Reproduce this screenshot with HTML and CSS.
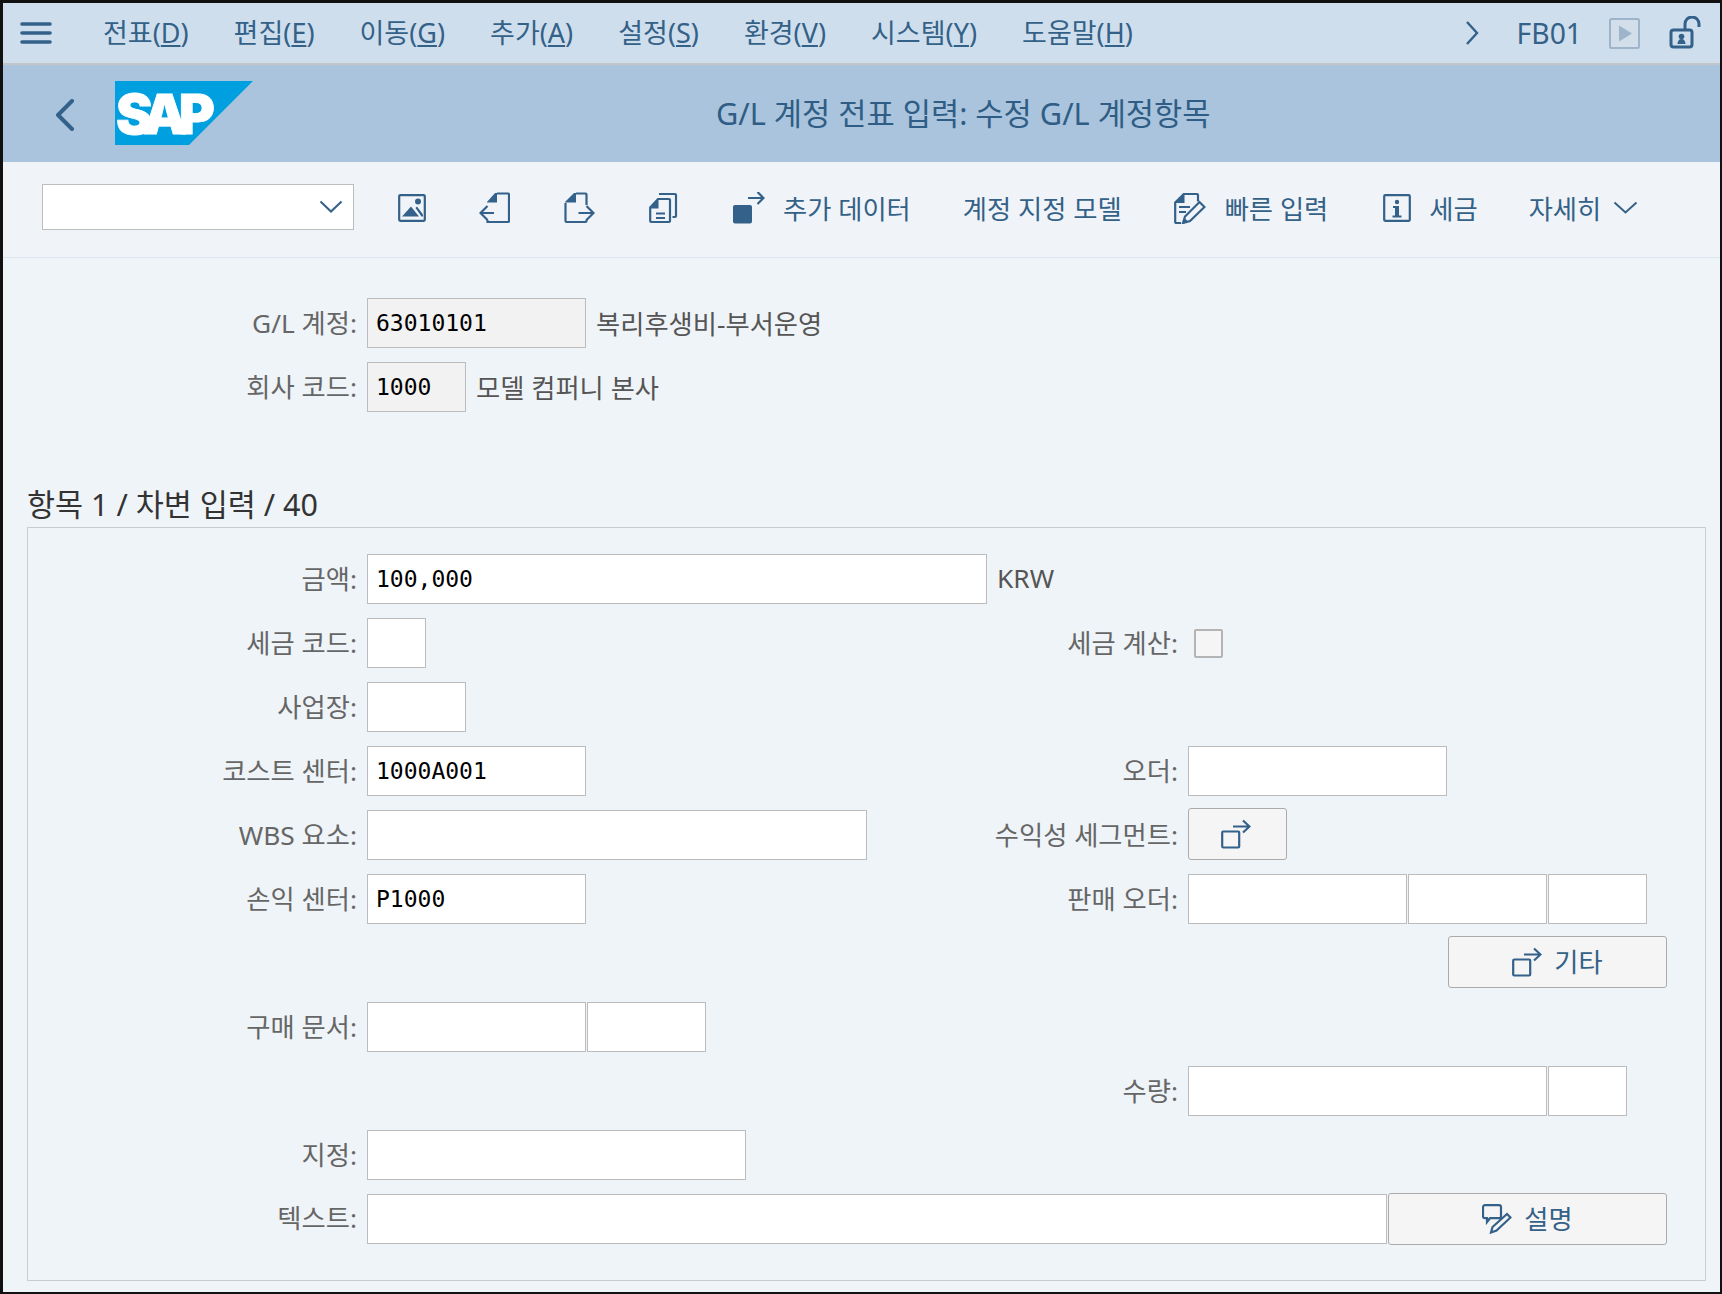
FILE: index.html
```html
<!DOCTYPE html>
<html lang="ko">
<head>
<meta charset="utf-8">
<title>G/L 계정 전표 입력</title>
<link rel="stylesheet" href="styles.css">
</head>
<body>
<div class="frame">
  <header class="menubar">
    <svg class="ic-burger" width="32" height="24" viewBox="0 0 32 24"><path d="M2 3h28M2 12h28M2 21h28"/></svg>
    <nav class="menu">
      <span>전표(<u>D</u>)</span>
      <span>편집(<u>E</u>)</span>
      <span>이동(<u>G</u>)</span>
      <span>추가(<u>A</u>)</span>
      <span>설정(<u>S</u>)</span>
      <span>환경(<u>V</u>)</span>
      <span>시스템(<u>Y</u>)</span>
      <span>도움말(<u>H</u>)</span>
    </nav>
    <svg class="ic-more" width="14" height="26" viewBox="0 0 14 26"><path d="M2 2l10 11L2 24"/></svg>
    <span class="tcode">FB01</span>
    <svg class="ic-play" width="31" height="31" viewBox="0 0 31 31"><rect x="1" y="1" width="29" height="29" rx="1.5"/><path d="M10 7.500l13 8-13 8z"/></svg>
    <svg class="ic-lock" width="33" height="33" viewBox="0 0 33 33"><rect class="s" x="2" y="14" width="21" height="17" rx="2.500"/><path class="s" d="M16 14V8a7 7 0 0 1 14 0v3"/><circle class="d" cx="12.500" cy="20.500" r="2.800"/><path class="d" d="M8.500 28c0-3 1.500-5 4-5s4 2 4 5z"/></svg>
  </header>

  <div class="titlebar">
    <svg class="ic-back" width="20" height="32" viewBox="0 0 20 32"><path d="M17 2L3 16l14 14"/></svg>
    <div class="logo"><span class="logo-text">SAP</span></div>
    <h1 class="title">G/L 계정 전표 입력: 수정 G/L 계정항목</h1>
  </div>

  <div class="toolbar">
    <div class="combo">
      <svg width="24" height="13" viewBox="0 0 24 13"><path d="M1.500 1.500L12 11.500 22.500 1.500"/></svg>
    </div>
    <svg class="tb i-img" width="28" height="28" viewBox="0 0 28 28"><rect class="s" x="1.200" y="1.200" width="25.600" height="25.600" rx="1"/><path class="d" d="M4 22.500l9-10 8 10z"/><circle class="d" cx="20" cy="7.500" r="3"/><path class="d" d="M17.500 14l1.500-1.500 6 8v2h-1.500z"/></svg>
    <svg class="tb i-prev" width="31" height="32" viewBox="0 0 31 32"><path class="s" d="M18 1.500h11a1 1 0 0 1 1 1V29a1 1 0 0 1-1 1H8.500v-2"/><path class="d" d="M8 10.500V10l8-9h2v9.500z"/><path class="s" d="M15 21H2M8.500 14L1.500 21l7 7"/></svg>
    <svg class="tb i-next" width="31" height="32" viewBox="0 0 31 32"><path class="s" d="M12 1.500h9.500a1 1 0 0 1 1 1V13M1.500 11v18a1 1 0 0 0 1 1H21.500a1 1 0 0 0 1-1v-1.500"/><path class="d" d="M1 10.500V10l9-9h2v9.500z"/><path class="s" d="M14.500 21H29M22.500 14l7 7-7 7"/></svg>
    <svg class="tb i-copy" width="29" height="32" viewBox="0 0 29 32"><path class="s" d="M1.200 15.500L9 7h11a1 1 0 0 1 1 1v21a1 1 0 0 1-1 1H2.200a1 1 0 0 1-1-1z"/><path class="d" d="M1 16.500L9.500 7v9.500z"/><path class="s" d="M10 2h16a1 1 0 0 1 1 1v21a1 1 0 0 1-1 1h-2.500"/><path class="s" d="M7 21.500h9M7 26h9"/></svg>
    <span class="tb-btn first">
      <svg width="32" height="32" viewBox="0 0 32 32"><rect class="d" x="0" y="13" width="19" height="18.500" rx="2"/><path class="s" d="M15 6h15.500M24.500 0l6 6-6 6"/></svg>
      <span class="lb">추가 데이터</span>
    </span>
    <span class="tb-txt">계정 지정 모델</span>
    <span class="tb-btn quick">
      <svg width="33" height="32" viewBox="0 0 33 32"><path class="s" d="M10 2h14a1 1 0 0 1 1 1v6.500M2.200 10v20a1 1 0 0 0 1 1H8"/><path class="d" d="M1.200 11v-1L10 1.200h1.500V11z"/><path class="s" d="M6 15h11M6 20h7"/><path class="s" d="M10 31l2-6.500L26.500 10l5 5L17 29z"/><path class="d" d="M10 31l1.500-5 3.500 3.500z"/></svg>
      <span class="lb">빠른 입력</span>
    </span>
    <span class="tb-btn info">
      <svg width="28" height="28" viewBox="0 0 28 28"><rect class="s" x="1.200" y="1.200" width="25.600" height="25.600" rx="1"/><circle class="d" cx="14" cy="8" r="2.200"/><path class="d" d="M10 12h6v9.500h2.500V23.500h-9V21.500H12V14h-2z"/></svg>
      <span class="lb">세금</span>
    </span>
    <span class="tb-txt more">자세히
      <svg width="25" height="13" viewBox="0 0 25 13"><path d="M1.500 1.500L12.500 11.500 23.500 1.500"/></svg>
    </span>
  </div>

  <main class="content">
    <div class="top-form">
      <div class="row">
        <label class="lbl">G/L 계정:</label>
        <div class="cell"><div class="f ro w218">63010101</div><span class="after">복리후생비-부서운영</span></div>
      </div>
      <div class="row">
        <label class="lbl">회사 코드:</label>
        <div class="cell"><div class="f ro w99">1000</div><span class="after">모델 컴퍼니 본사</span></div>
      </div>
    </div>

    <h2 class="group-title">항목 1 / 차변 입력 / 40</h2>
    <section class="group">
      <div class="row">
        <label class="lbl">금액:</label>
        <div class="cell"><div class="f w619">100,000</div><span class="after">KRW</span></div>
      </div>
      <div class="row">
        <label class="lbl">세금 코드:</label>
        <div class="cell"><div class="f w59"></div><label class="rlbl">세금 계산:</label></div>
        <div class="cell"><span class="check"></span></div>
      </div>
      <div class="row">
        <label class="lbl">사업장:</label>
        <div class="cell"><div class="f w99"></div></div>
      </div>
      <div class="row">
        <label class="lbl">코스트 센터:</label>
        <div class="cell"><div class="f w218">1000A001</div><label class="rlbl">오더:</label></div>
        <div class="cell"><div class="f w258"></div></div>
      </div>
      <div class="row">
        <label class="lbl">WBS 요소:</label>
        <div class="cell"><div class="f w499"></div><label class="rlbl">수익성 세그먼트:</label></div>
        <div class="cell">
          <button class="btn w99">
            <svg class="ic-nav" width="30" height="30" viewBox="0 0 30 30"><rect x="1.200" y="12.500" width="17" height="16" rx="1"/><path d="M12 7.500h16.500M22 1.500l6.500 6-6.500 6"/></svg>
          </button>
        </div>
      </div>
      <div class="row">
        <label class="lbl">손익 센터:</label>
        <div class="cell"><div class="f w218">P1000</div><label class="rlbl">판매 오더:</label></div>
        <div class="cell multi"><div class="f w219"></div><div class="f w139"></div><div class="f w98"></div></div>
      </div>
      <div class="row">
        <div class="lbl"></div>
        <div class="cell"></div>
        <div class="cell end">
          <button class="btn w220">
            <svg class="ic-nav" width="30" height="30" viewBox="0 0 30 30"><rect x="1.200" y="12.500" width="17" height="16" rx="1"/><path d="M12 7.500h16.500M22 1.500l6.500 6-6.500 6"/></svg>
            <span>기타</span>
          </button>
        </div>
      </div>
      <div class="row">
        <label class="lbl">구매 문서:</label>
        <div class="cell multi"><div class="f w218"></div><div class="f w118"></div></div>
      </div>
      <div class="row">
        <div class="lbl"></div>
        <div class="cell"><label class="rlbl">수량:</label></div>
        <div class="cell multi"><div class="f w359"></div><div class="f w78"></div></div>
      </div>
      <div class="row">
        <label class="lbl">지정:</label>
        <div class="cell"><div class="f w378"></div></div>
      </div>
      <div class="row last">
        <label class="lbl">텍스트:</label>
        <div class="cell wide multi">
          <div class="f w1019"></div>
          <button class="btn w279">
            <svg class="ic-note" width="30" height="30" viewBox="0 0 30 30"><path d="M3 1.200h14a2 2 0 0 1 2 2v9a2 2 0 0 1-2 2H8L5 18v-3.800H3a2 2 0 0 1-2-2v-9a2 2 0 0 1 2-2z"/><path d="M9 28.500l1.500-5.500L25 10l3.500 3.500L14.500 26.500z"/></svg>
            <span>설명</span>
          </button>
        </div>
      </div>
    </section>
  </main>
</div>
</body>
</html>
```

FILE: styles.css
```css
* { box-sizing: border-box; }
html, body { margin: 0; padding: 0; }
body {
  width: 1722px;
  height: 1294px;
  font-family: "Noto Sans", "Noto Sans CJK KR", sans-serif;
  font-size: 26.3px;
  overflow: hidden;
}
.frame {
  width: 1722px;
  height: 1294px;
  border-style: solid;
  border-color: #111;
  border-width: 3px 2px 2px 3px;
  background: #eff4f8;
  display: flex;
  flex-direction: column;
}
svg { display: block; flex: none; }
svg .s { fill: none; stroke: #34618a; stroke-width: 2.2; }
svg .d { fill: #34618a; stroke: none; }

/* menu bar */
.menubar {
  height: 62px;
  background: #cfdeed;
  border-bottom: 2px solid #c3c6c8;
  display: flex;
  align-items: center;
  padding-left: 17px;
  color: #346187;
  flex: none;
}
.ic-burger { margin-top: -1px; }
.ic-burger path { stroke: #34618a; stroke-width: 3.6; stroke-linecap: round; fill: none; }
.menu { display: flex; gap: 45px; margin-left: 51px; font-size: 27px; line-height: 56px; }
.menu span { white-space: nowrap; }
.ic-more { margin-left: auto; }
.ic-more path { fill: none; stroke: #34618a; stroke-width: 2.4; }
.tcode { margin-left: 38px; font-size: 28.3px; }
.ic-play { margin-left: 27px; }
.ic-play rect { fill: #d2deea; stroke: #9db4ca; stroke-width: 2; }
.ic-play path { fill: #9db4ca; }
.ic-lock { margin-left: 29px; margin-right: 18px; margin-top: -2px; }
.ic-lock .s { stroke-width: 3; }

/* title bar */
.titlebar {
  height: 97px;
  background: #a9c4dc;
  display: flex;
  align-items: center;
  flex: none;
}
.ic-back { margin-left: 52px; margin-top: 3px; }
.ic-back path { fill: none; stroke: #34618a; stroke-width: 4; stroke-linecap: round; stroke-linejoin: round; }
.logo {
  position: relative;
  width: 138px;
  height: 64px;
  margin-left: 40px;
  margin-top: -1px;
  padding: 0 0 0 1px;
  flex: none;
}
.logo::before {
  content: "";
  position: absolute;
  inset: 0;
  background: #009fe0;
  clip-path: polygon(0 0, 100% 0, 74px 100%, 0 100%);
}
.logo-text {
  position: relative;
  display: block;
  font-family: Inter, "Liberation Sans", sans-serif;
  font-weight: 900;
  font-size: 55px;
  line-height: 66px;
  letter-spacing: -8px;
  color: #fff;
  -webkit-text-stroke: 0.8px #fff;
}
.title {
  font-size: 30.7px;
  font-weight: 400;
  color: #2f5d85;
  margin: -4px 0 0 463px;
  white-space: nowrap;
}

/* toolbar */
.toolbar {
  height: 96px;
  background: #f0f4f8;
  border-bottom: 1px solid #dbe5ee;
  display: flex;
  align-items: center;
  padding: 0 0 4px 39px;
  color: #346187;
  flex: none;
}
.combo {
  width: 312px;
  height: 46px;
  background: #fff;
  border: 1px solid #bdbdbd;
  display: flex;
  align-items: center;
  justify-content: flex-end;
  padding-right: 10px;
  margin-bottom: 2px;
}
.combo path, .more path { fill: none; stroke: #34618a; stroke-width: 2; }
.i-img { margin-left: 44px; }
.i-prev { margin-left: 53px; }
.i-next { margin-left: 54px; }
.i-copy { margin-left: 54px; }
.tb-btn { display: flex; align-items: center; white-space: nowrap; }
.tb-btn .lb { margin-left: 18px; }
.first { margin-left: 55px; }
.tb-txt { margin-left: 52px; white-space: nowrap; display: flex; align-items: center; }
.quick { margin-left: 51px; }
.quick .lb { margin-left: 19px; }
.info { margin-left: 55px; }
.more { margin-left: 51px; gap: 12px; }

/* form */
.content { padding: 40px 0 0 24px; flex: 1; }
.top-form { padding-left: 1px; }
.row {
  display: grid;
  grid-template-columns: 339px 821px 1fr;
  height: 50px;
  margin-bottom: 14px;
}
.row.last { margin-top: -1px; margin-bottom: 0; }
.lbl {
  padding-right: 10px;
  text-align: right;
  line-height: 50px;
  color: #666;
  white-space: nowrap;
}
.cell { display: flex; align-items: center; }
.cell.multi { gap: 1px; }
.cell.end { justify-content: flex-start; padding-left: 260px; }
.cell.wide { grid-column: 2 / 4; }
.rlbl {
  margin-left: auto;
  margin-right: 10px;
  color: #666;
  line-height: 48px;
  white-space: nowrap;
}
.f {
  height: 50px;
  background: #fff;
  border: 1px solid #bcbcbc;
  font-family: "DejaVu Sans Mono", monospace;
  font-size: 23px;
  line-height: 49px;
  padding-left: 8px;
  color: #000;
  flex: none;
}
.f.ro { background: #f2f2f2; }
.after { margin-left: 10px; color: #555; white-space: nowrap; margin-top: -2px; }
.w59 { width: 59px; }
.w78 { width: 79px; }
.w98 { width: 99px; }
.w99 { width: 99px; }
.w118 { width: 119px; }
.w139 { width: 139px; }
.w218 { width: 219px; }
.w219 { width: 219px; }
.w220 { width: 219px; padding-left: 3px; gap: 11px; margin-top: -2px; }
.w258 { width: 259px; }
.w279 { width: 279px; padding-left: 3px; gap: 11px; }
.w359 { width: 359px; }
.w378 { width: 379px; }
.w499 { width: 500px; }
.w619 { width: 620px; }
.w1019 { width: 1020px; }

.group-title {
  font-size: 30.5px;
  font-weight: 400;
  color: #333;
  margin: 64px 0 0;
  height: 51px;
  line-height: 57px;
}
.group {
  width: 1679px;
  height: 754px;
  border: 1px solid #c9cdd1;
  padding-top: 26px;
}
.check {
  width: 29px;
  height: 29px;
  margin-left: 6px;
  background: #f5f5f5;
  border: 2px solid #b4b4b4;
  border-radius: 2px;
}
.btn {
  height: 52px;
  background: #f5f5f5;
  border: 1.500px solid #ababab;
  border-radius: 3px;
  font: inherit;
  color: #346187;
  display: flex;
  align-items: center;
  justify-content: center;
  gap: 12px;
  padding: 0;
  flex: none;
}
.btn span { margin-top: -3px; }
.btn.w99 { padding-right: 4px; margin-top: -2px; }
.ic-nav rect, .ic-nav path { fill: none; stroke: #34618a; stroke-width: 2.2; }
.ic-note path { fill: none; stroke: #34618a; stroke-width: 2.2; }
```
